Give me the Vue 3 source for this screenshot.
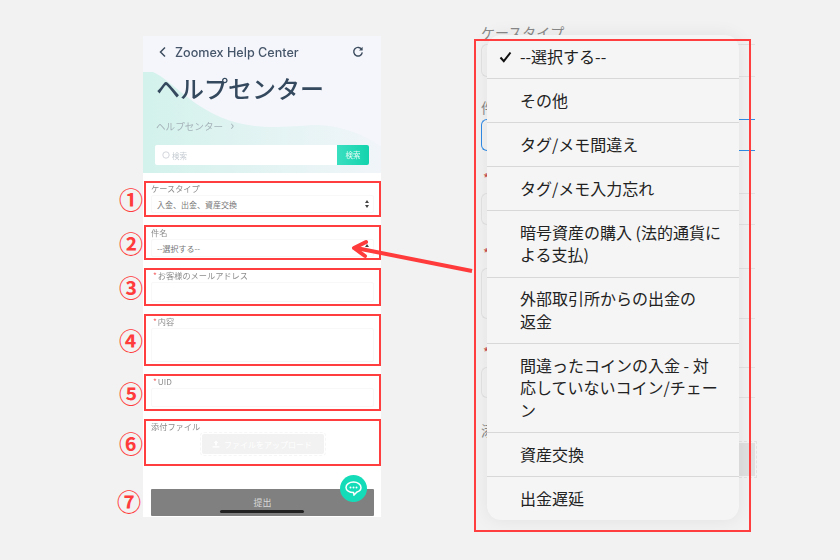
<script setup>
const fields = [
  { no: '①', label: 'ケースタイプ', value: '入金、出金、資産交換', height: 36, inputHeight: 18, select: true },
  { no: '②', label: '件名', value: '--選択する--', height: 35, inputHeight: 18, select: true },
  { no: '③', label: 'お客様のメールアドレス', required: true, height: 38, inputHeight: 20 },
  { no: '④', label: '内容', required: true, height: 52, inputHeight: 34 },
  { no: '⑤', label: 'UID', required: true, height: 37, inputHeight: 19 },
]

// the form behind the open menu: only its edges show
const ghosts = [
  { id: 1, label: 'ケースタイプ', gap: 5, drop: 5, height: 33 },
  { id: 2, label: '件', gap: 23, drop: 5, height: 32, focus: true },
  { id: 3, required: true, gap: 20, drop: 8, height: 32 },
  { id: 4, required: true, gap: 21, drop: 8, height: 51 },
  { id: 5, required: true, gap: 26, drop: 8, height: 31 },
]

const options = [
  { text: '--選択する--', checked: true },
  { text: 'その他' },
  { text: 'タグ/メモ間違え' },
  { text: 'タグ/メモ入力忘れ' },
  { text: '暗号資産の購入 (法的通貨による支払)' },
  { text: '外部取引所からの出金の\n返金' },
  { text: '間違ったコインの入金 - 対応していないコイン/チェーン' },
  { text: '資産交換' },
  { text: '出金遅延' },
]
</script>

<template>
  <div class="page">
    <div class="phone">
      <div class="hero">
        <svg class="wave" width="238" height="137" viewBox="0 0 238 137">
          <defs>
            <linearGradient id="waveFill" x1="0" x2="1" y1="0" y2="0">
              <stop offset="0" stop-color="#d3f2ec" />
              <stop offset="1" stop-color="#f1f5f9" />
            </linearGradient>
          </defs>
          <path d="M0 36H10C28 44 50 72 85 84C115 94 140 91 170 89C195 88 220 98 238 110V137H0Z" fill="url(#waveFill)" />
        </svg>
        <div class="topbar">
          <svg width="9" height="12" viewBox="0 0 9 12" class="back">
            <path d="M7 1.500L2.500 6L7 10.500" fill="none" stroke="#3d4d5f" stroke-width="1.500" />
          </svg>
          <span class="topbar-title">Zoomex Help Center</span>
          <svg width="12" height="12" viewBox="0 0 12 12" class="reload">
            <path d="M9.800 3.600A4.300 4.300 0 1 0 10.300 6.400" fill="none" stroke="#3d4d5f" stroke-width="1.400" />
            <path d="M10.600 0.800V4.400H7Z" fill="#3d4d5f" />
          </svg>
        </div>
        <h1>ヘルプセンター</h1>
        <div class="crumb">ヘルプセンター <span class="crumb-arrow">›</span></div>
        <div class="search">
          <svg width="8" height="8" viewBox="0 0 8 8">
            <circle cx="4" cy="4" r="3.200" fill="none" stroke="#c6ccd2" stroke-width="0.800" />
          </svg>
          <span class="search-text">検索</span>
          <span class="search-btn">検索</span>
        </div>
      </div>

      <div class="form">
        <div v-for="f in fields" :key="f.no" class="box" :style="{ height: f.height + 'px' }">
          <span class="no">{{ f.no }}</span>
          <div class="label"><span v-if="f.required" class="req">*</span>{{ f.label }}</div>
          <div class="input" :style="{ height: f.inputHeight + 'px' }">
            <span>{{ f.value }}</span>
            <span v-if="f.select" class="updown">
              <i class="up"></i>
              <i class="down"></i>
            </span>
          </div>
        </div>
        <div class="box upload-box">
          <span class="no">⑥</span>
          <div class="label">添付ファイル</div>
          <div class="upload">
            <svg width="8" height="8" viewBox="0 0 8 8">
              <path d="M4 0.500L6.200 3H4.800V5.500H3.200V3H1.800ZM0.500 6.200H7.500V7.600H0.500Z" fill="#fff" />
            </svg>
            <span>ファイルをアップロード</span>
          </div>
        </div>
        <div class="submit-row">
          <span class="no no-submit">⑦</span>
          <div class="submit">提出</div>
        </div>
      </div>

      <div class="chat">
        <svg width="17" height="15" viewBox="0 0 17 15">
          <path d="M8.500 1C4.400 1 1 3.400 1 6.400C1 9.400 4.400 11.600 8.500 11.600L9 14L12 11C14.400 10.100 16 8.400 16 6.400C16 3.400 12.600 1 8.500 1Z" fill="none" stroke="#fff" stroke-width="1.500" />
          <circle cx="5.500" cy="6.400" r="1" fill="#fff" />
          <circle cx="8.500" cy="6.400" r="1" fill="#fff" />
          <circle cx="11.500" cy="6.400" r="1" fill="#fff" />
        </svg>
      </div>
      <div class="home-bar"></div>
    </div>

    <div class="sheet">
      <template v-for="g in ghosts" :key="g.id">
        <div class="ghost-label" :style="{ marginTop: g.gap + 'px' }">
          <span v-if="g.required" class="req">*</span>{{ g.label }}
        </div>
        <div
          class="ghost-input"
          :class="{ focus: g.focus }"
          :style="{ marginTop: g.drop + 'px', height: g.height + 'px' }"
        ></div>
      </template>
      <div class="ghost-label last">添</div>
      <div class="ghost-upload"></div>

      <ul class="menu">
        <li v-for="o in options" :key="o.text">
          <svg v-if="o.checked" class="check" width="13" height="12" viewBox="0 0 13 12">
            <path d="M1.500 6.500L4.800 10.200L11.500 1.500" fill="none" stroke="#111" stroke-width="2" />
          </svg>
          <span class="option-text">{{ o.text }}</span>
        </li>
      </ul>
      <div class="menu-frame"></div>
    </div>

    <svg class="arrow" width="130" height="40" viewBox="0 0 130 40">
      <path d="M124 33L8 10" stroke="#ff3b3b" stroke-width="4" fill="none" />
      <path d="M18 4L6 10L17 18" stroke="#ff3b3b" stroke-width="4" fill="none" stroke-linejoin="round" stroke-linecap="round" />
    </svg>
  </div>
</template>

<style>
html, body {
  margin: 0;
  background: #f2f2f2;
}
</style>

<style scoped>
.page {
  position: relative;
  width: 840px;
  height: 560px;
  overflow: hidden;
  display: flex;
  align-items: flex-start;
  padding: 20px 0 0 143px;
  box-sizing: border-box;
  font-family: "Noto Sans CJK JP", "Noto Sans", sans-serif;
}

.phone {
  position: relative;
  width: 238px;
  height: 481px;
  margin-top: 16px;
  background: #fff;
  flex-shrink: 0;
}

.hero {
  position: relative;
  height: 137px;
  background: #f5f6fb;
  padding: 0 12px;
  box-sizing: border-box;
  filter: blur(0.300px);
}

.wave {
  position: absolute;
  left: 0;
  top: 0;
}

.topbar {
  position: relative;
  display: flex;
  align-items: center;
  height: 32px;
  padding: 0 5px 0 3px;
}

.back {
  margin-right: 8px;
}

.topbar-title {
  flex: 1;
  font-family: Inter, "Noto Sans", sans-serif;
  font-size: 12.600px;
  font-weight: 500;
  color: #46566a;
}

h1 {
  position: relative;
  margin: 0;
  font-size: 24px;
  font-weight: 500;
  line-height: 40px;
  padding-left: 1px;
  color: #34495e;
}

.crumb {
  position: relative;
  margin-top: 10px;
  padding-left: 1px;
  font-size: 9.600px;
  line-height: 14px;
  color: #a4b2b8;
}

.crumb-arrow {
  margin-left: 5px;
  font-size: 13px;
}

.search {
  position: relative;
  display: flex;
  align-items: center;
  height: 20px;
  margin-top: 12px;
  padding-left: 7px;
  background: #fff;
  border-radius: 2px;
  overflow: hidden;
}

.search-text {
  flex: 1;
  margin-left: 2px;
  font-size: 7.500px;
  color: #c6ccd2;
}

.search-btn {
  width: 32px;
  height: 20px;
  line-height: 20px;
  text-align: center;
  font-size: 7.500px;
  color: #e8fbf6;
  background: linear-gradient(90deg, #3adfc0, #12d3ad);
}

.form {
  display: flex;
  flex-direction: column;
  gap: 8px;
  padding: 8px 0 0 1px;
}

.box {
  position: relative;
  width: 237px;
  box-sizing: border-box;
  border: 2px solid #ff3f3f;
  padding: 0 5px;
}

.no {
  position: absolute;
  left: -27px;
  top: 50%;
  transform: translateY(-50%);
  font-size: 24px;
  font-weight: 700;
  line-height: 24px;
  color: #ff3b3b;
}

.label {
  height: 12px;
  font-size: 8.200px;
  line-height: 11px;
  color: #8c8c8c;
  white-space: nowrap;
  filter: blur(0.300px);
}

.req {
  color: #f46a6a;
  margin: 0 1px 0 2px;
}

.input {
  display: flex;
  align-items: center;
  justify-content: space-between;
  padding: 0 5px;
  border: 1px solid #f8f8f8;
  border-radius: 2px;
  font-size: 8px;
  color: #777;
  box-sizing: border-box;
}

.updown {
  display: flex;
  flex-direction: column;
  gap: 2px;
  margin-right: -1px;
}

.updown i {
  width: 0;
  height: 0;
  border-left: 2px solid transparent;
  border-right: 2px solid transparent;
}

.updown .up {
  border-bottom: 3px solid #444;
}

.updown .down {
  border-top: 3px solid #444;
}

.upload-box {
  height: 47px;
}

.upload {
  display: flex;
  align-items: center;
  gap: 4px;
  width: 122px;
  height: 20px;
  margin: 1px 0 0 51px;
  padding-left: 10px;
  box-sizing: border-box;
  background: #f2f2f2;
  border-radius: 2px;
  outline: 1px dashed #f6f6f6;
  outline-offset: 1px;
  font-size: 8px;
  color: #fff;
}

.submit-row {
  position: relative;
  margin-top: 15px;
  padding-left: 7px;
}

.no-submit {
  top: 12px;
}

.submit {
  width: 223px;
  height: 27px;
  background: #808080;
  border-radius: 1px;
  font-size: 9px;
  line-height: 27px;
  text-align: center;
  color: #d8d8d8;
}

.chat {
  position: absolute;
  left: 197px;
  top: 439px;
  width: 27px;
  height: 27px;
  border-radius: 50%;
  background: #14dcb9;
  display: flex;
  align-items: center;
  justify-content: center;
}

.home-bar {
  position: absolute;
  left: 77px;
  top: 474px;
  width: 84px;
  height: 2.500px;
  border-radius: 2px;
  background: #222;
}

.sheet {
  position: relative;
  width: 274px;
  height: 520px;
  margin-left: 100px;
  flex-shrink: 0;
}

.ghost-label {
  height: 14px;
  font-size: 14px;
  line-height: 14px;
  color: #888;
  white-space: nowrap;
}

.ghost-label.last {
  margin-top: 25px;
}

.ghost-label .req {
  color: #c64a4a;
  margin-left: 2px;
}

.ghost-input {
  box-sizing: border-box;
  width: 274px;
  border: 1px solid #e2e2e2;
  border-right: none;
  border-radius: 6px 0 0 6px;
}

.ghost-input.focus {
  border: 1.500px solid #2f8be6;
  border-right: none;
}

.ghost-upload {
  width: 120px;
  height: 33px;
  margin: 6px 0 0 154px;
  background: #e0e0e0;
  outline: 1px dashed #e2e2e2;
  outline-offset: 1px;
}

.menu {
  position: absolute;
  left: 6px;
  top: 15px;
  width: 252px;
  margin: 0;
  padding: 0;
  list-style: none;
  background: #f5f5f5;
  border-radius: 14px;
  overflow: hidden;
  box-shadow: 0 0 18px rgba(0, 0, 0, 0.07);
}

.menu li {
  position: relative;
  padding: 9.500px 16px 11px 33px;
  border-bottom: 1px solid #d8d8d8;
  font-size: 16px;
  line-height: 22.500px;
  color: #222;
}

.menu li:last-child {
  border-bottom: none;
}

.option-text {
  white-space: pre-line;
}

.check {
  position: absolute;
  left: 12px;
  top: 16px;
}

.menu-frame {
  position: absolute;
  left: -7px;
  top: 19px;
  width: 277px;
  height: 493px;
  box-sizing: border-box;
  border: 2px solid #ff3f3f;
  pointer-events: none;
}

.arrow {
  position: absolute;
  left: 348px;
  top: 238px;
}
</style>
